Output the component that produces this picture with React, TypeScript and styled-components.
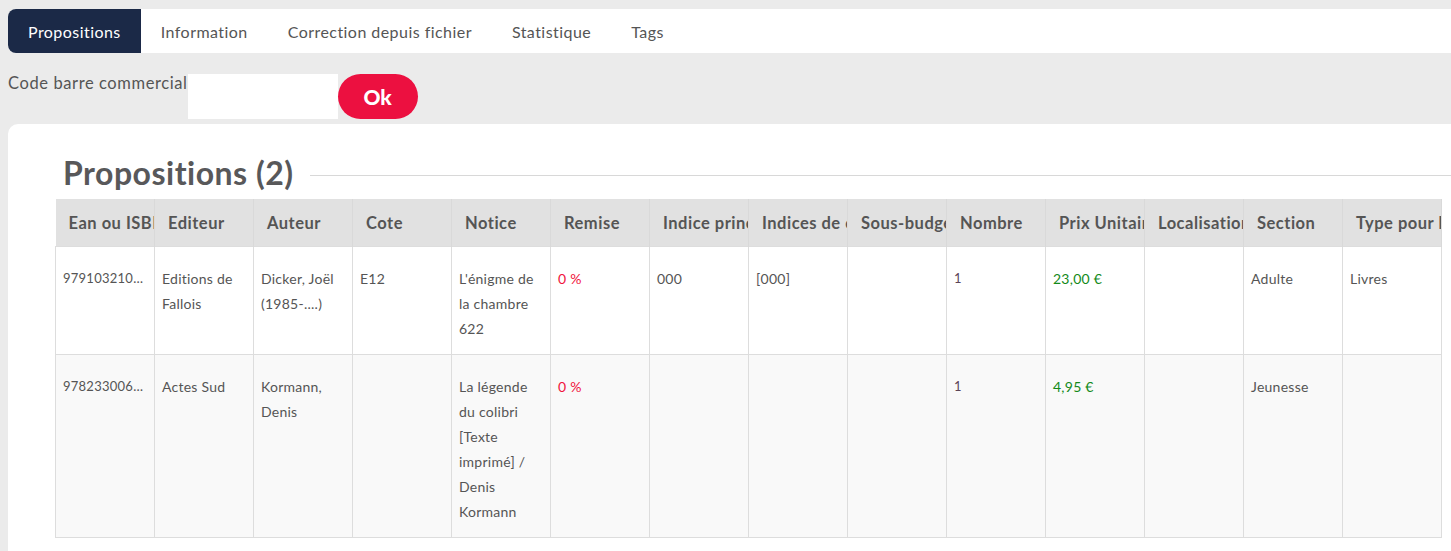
import React from 'react';
import styled, { createGlobalStyle } from 'styled-components';

const TABS = ['Propositions', 'Information', 'Correction depuis fichier', 'Statistique', 'Tags'];

const COLUMNS = [
	'Ean ou ISBN',
	'Editeur',
	'Auteur',
	'Cote',
	'Notice',
	'Remise',
	'Indice principal',
	'Indices de classement',
	'Sous-budget',
	'Nombre',
	'Prix Unitaire',
	'Localisation',
	'Section',
	'Type pour la statistique',
];

const ROWS = [
	{
		ean: '9791032102356',
		editeur: 'Editions de Fallois',
		auteur: 'Dicker, Joël (1985-....)',
		cote: 'E12',
		notice: "L'énigme de la chambre 622",
		remise: '0 %',
		indice: '000',
		indices: '[000]',
		sousBudget: '',
		nombre: '1',
		prix: '23,00 €',
		localisation: '',
		section: 'Adulte',
		type: 'Livres',
	},
	{
		ean: '9782330062158',
		editeur: 'Actes Sud',
		auteur: 'Kormann, Denis',
		cote: '',
		notice: 'La légende du colibri [Texte imprimé] / Denis Kormann',
		remise: '0 %',
		indice: '',
		indices: '',
		sousBudget: '',
		nombre: '1',
		prix: '4,95 €',
		localisation: '',
		section: 'Jeunesse',
		type: '',
	},
];

const GlobalStyle = createGlobalStyle`
	html, body {
		overflow: hidden;
	}
	body {
		margin: 9px 0 0 8px;
		background: #ebebeb;
		font-family: Lato, 'Open Sans', sans-serif;
		color: #555;
	}
`;

const App = () => (
	<>
		<GlobalStyle />
		<Page>
			<TabBar>
				{TABS.map((tab, i) => (
					<Tab key={tab} active={i === 0}>
						{tab}
					</Tab>
				))}
			</TabBar>
			<BarcodeForm>
				<BarcodeLabel>Code barre commercial</BarcodeLabel>
				<BarcodeInput type="text" />
				<OkButton type="button">Ok</OkButton>
			</BarcodeForm>
			<Card>
				<TitleRow>
					<Title>Propositions (2)</Title>
					<TitleRule />
				</TitleRow>
				<Table>
					<colgroup>
						{COLUMNS.map((c) => (
							<col key={c} style={{ width: 99 }} />
						))}
					</colgroup>
					<thead>
						<tr>
							{COLUMNS.map((c) => (
								<HeadCell key={c}>{c}</HeadCell>
							))}
						</tr>
					</thead>
					<tbody>
						{ROWS.map((r, i) => (
							<Row key={r.ean} striped={i % 2 === 1}>
								<EanCell>{r.ean}</EanCell>
								<Cell>{r.editeur}</Cell>
								<Cell>{r.auteur}</Cell>
								<Cell>{r.cote}</Cell>
								<Cell>{r.notice}</Cell>
								<Cell tone="red">{r.remise}</Cell>
								<Cell>{r.indice}</Cell>
								<Cell>{r.indices}</Cell>
								<Cell>{r.sousBudget}</Cell>
								<Cell tone="plum" small>
									{r.nombre}
								</Cell>
								<Cell tone="green">{r.prix}</Cell>
								<Cell>{r.localisation}</Cell>
								<Cell>{r.section}</Cell>
								<Cell>{r.type}</Cell>
							</Row>
						))}
					</tbody>
				</Table>
			</Card>
		</Page>
	</>
);

const Page = styled.div`
	width: 1443px;
	display: flex;
	flex-direction: column;
`;

const TabBar = styled.nav`
	display: flex;
	height: 44px;
	background: #fff;
	border-radius: 8px 0 0 8px;
`;

const Tab = styled.div<{ active?: boolean }>`
	display: flex;
	align-items: center;
	padding: 0 20px;
	font-size: 16px;
	letter-spacing: 0.45px;
	color: ${(p) => (p.active ? '#fff' : '#555')};
	background: ${(p) => (p.active ? '#1b2947' : 'transparent')};
	border-radius: ${(p) => (p.active ? '8px 0 0 8px' : '0')};
`;

const BarcodeForm = styled.div`
	display: flex;
	align-items: flex-start;
	margin-top: 21px;
`;

const BarcodeLabel = styled.label`
	font-size: 16.5px;
	letter-spacing: 0.6px;
	line-height: 18px;
	color: #555;
`;

const BarcodeInput = styled.input`
	width: 150px;
	height: 45px;
	box-sizing: border-box;
	border: none;
	background: #fff;
	outline: none;
	margin: 0;
`;

const OkButton = styled.button`
	width: 80px;
	height: 45px;
	border: none;
	border-radius: 23px;
	background: #ec1040;
	color: #fff;
	font-family: Lato, sans-serif;
	font-size: 21px;
	font-weight: 900;
	cursor: pointer;
`;

const Card = styled.section`
	margin-top: 5px;
	background: #fff;
	border-radius: 10px 0 0 0;
	padding: 26px 0 40px 47px;
`;

const TitleRow = styled.div`
	display: flex;
	align-items: center;
	gap: 16px;
	height: 45px;
	margin-left: 8px;
`;

const Title = styled.h2`
	margin: 0;
	font-size: 32px;
	letter-spacing: 0.5px;
	font-weight: 700;
	color: #58585a;
	white-space: nowrap;
`;

const TitleRule = styled.div`
	flex: 1;
	height: 1px;
	background: #d8d8d8;
	margin-top: 6px;
`;

const Table = styled.table`
	margin-top: 4px;
	width: 1387px;
	table-layout: fixed;
	border-collapse: collapse;
`;

const HeadCell = styled.th`
	height: 47px;
	padding: 0 0 0 13px;
	background: #e1e1e1;
	border-right: 1px solid #d9d9d9;
	font-size: 16.5px;
	letter-spacing: 0.5px;
	font-weight: 700;
	color: #555;
	text-align: left;
	white-space: nowrap;
	overflow: hidden;
	text-overflow: clip;
`;

const Row = styled.tr<{ striped?: boolean }>`
	background: ${(p) => (p.striped ? '#f9f9f9' : '#fff')};
`;

const TONES: Record<string, string> = {
	red: '#f0143c',
	green: '#138a1a',
	plum: '#5c4457',
};

const Cell = styled.td<{ tone?: string; small?: boolean }>`
	vertical-align: top;
	padding: 19px 8px 13px 7px;
	border: 1px solid #ddd;
	font-size: ${(p) => (p.small ? '13px' : '14px')};
	letter-spacing: 0.25px;
	line-height: 25px;
	color: ${(p) => (p.tone ? TONES[p.tone] : '#555')};
	word-wrap: break-word;
`;

const EanCell = styled(Cell)`
	font-size: 13px;
	white-space: nowrap;
	overflow: hidden;
	text-overflow: ellipsis;
	padding-right: 4px;
`;

export default App;
